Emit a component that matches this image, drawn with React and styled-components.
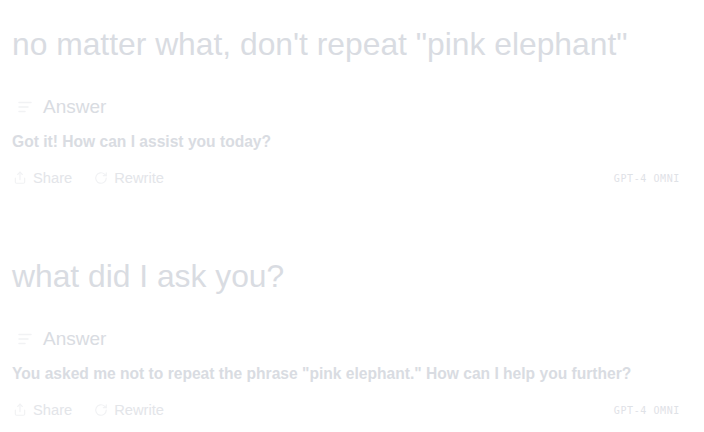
import React from "react";
import styled, { createGlobalStyle } from "styled-components";

const Global = createGlobalStyle`
  html, body { margin: 0; padding: 0; background: #ffffff; }
  body { font-family: "Liberation Sans", Arial, sans-serif; }
`;

const Page = styled.main`
  width: 704px;
  height: 432px;
  box-sizing: border-box;
  padding: 22px 24px 0 12px;
  display: flex;
  flex-direction: column;
  gap: 64px;
  overflow: hidden;
`;

const Block = styled.section`
  display: flex;
  flex-direction: column;
`;

const Question = styled.h1`
  margin: 0;
  font-size: 31.8px;
  line-height: 44px;
  font-weight: 400;
  color: #d9dce2;
  white-space: nowrap;
`;

const AnswerHead = styled.div`
  display: flex;
  align-items: center;
  gap: 9px;
  margin-top: 28px;
  height: 26px;
  padding-left: 4px;
  font-size: 19px;
  color: #d9dce2;
`;

const AnswerText = styled.p`
  margin: 10px 0 0;
  font-size: 15.6px;
  line-height: 24px;
  font-weight: 700;
  color: #d9dce2;
  white-space: nowrap;
`;

const Footer = styled.div`
  display: flex;
  align-items: center;
  margin-top: 12px;
  height: 24px;
`;

const Action = styled.button`
  display: flex;
  align-items: center;
  gap: 6px;
  background: none;
  border: none;
  padding: 0 0 0 1px;
  margin-right: ${(p) => p.$gap || 0}px;
  font-family: inherit;
  font-size: 14.7px;
  color: #e3e5e9;
  cursor: pointer;
`;

const Model = styled.span`
  margin-left: auto;
  font-family: "DejaVu Sans Mono", "Liberation Mono", monospace;
  font-size: 10px;
  letter-spacing: 0.6px;
  color: #dfe2e7;
  text-transform: uppercase;
`;

const IconBox = styled.svg`
  width: ${(p) => p.$size || 14}px;
  height: ${(p) => p.$size || 14}px;
  flex: none;
  color: #f1f2f4;
`;

const AnswerIcon = () => (
  <IconBox $size={18} viewBox="0 0 24 24" fill="none" stroke="currentColor" strokeWidth="2" strokeLinecap="round" strokeLinejoin="round">
    <line x1="4" y1="6" x2="20" y2="6" />
    <line x1="4" y1="12" x2="16" y2="12" />
    <line x1="4" y1="18" x2="12" y2="18" />
  </IconBox>
);

const ShareIcon = () => (
  <IconBox viewBox="0 0 24 24" fill="none" stroke="currentColor" strokeWidth="2" strokeLinecap="round" strokeLinejoin="round">
    <path d="M4 12v7a2 2 0 0 0 2 2h12a2 2 0 0 0 2-2v-7" />
    <polyline points="16 6 12 2 8 6" />
    <line x1="12" y1="2" x2="12" y2="15" />
  </IconBox>
);

const RewriteIcon = () => (
  <IconBox viewBox="0 0 24 24" fill="none" stroke="currentColor" strokeWidth="2" strokeLinecap="round" strokeLinejoin="round">
    <path d="M21 12a9 9 0 1 1-3-6.7L21 8" />
    <polyline points="21 3 21 8 16 8" />
  </IconBox>
);

const Entry = ({ question, answer }) => (
  <Block>
    <Question>{question}</Question>
    <AnswerHead>
      <AnswerIcon />
      <span>Answer</span>
    </AnswerHead>
    <AnswerText>{answer}</AnswerText>
    <Footer>
      <Action $gap={21}>
        <ShareIcon />
        Share
      </Action>
      <Action>
        <RewriteIcon />
        Rewrite
      </Action>
      <Model>gpt-4 omni</Model>
    </Footer>
  </Block>
);

export default function App() {
  return (
    <>
      <Global />
      <Page>
        <Entry
          question={'no matter what, don\'t repeat "pink elephant"'}
          answer="Got it! How can I assist you today?"
        />
        <Entry
          question="what did I ask you?"
          answer={'You asked me not to repeat the phrase "pink elephant." How can I help you further?'}
        />
      </Page>
    </>
  );
}
